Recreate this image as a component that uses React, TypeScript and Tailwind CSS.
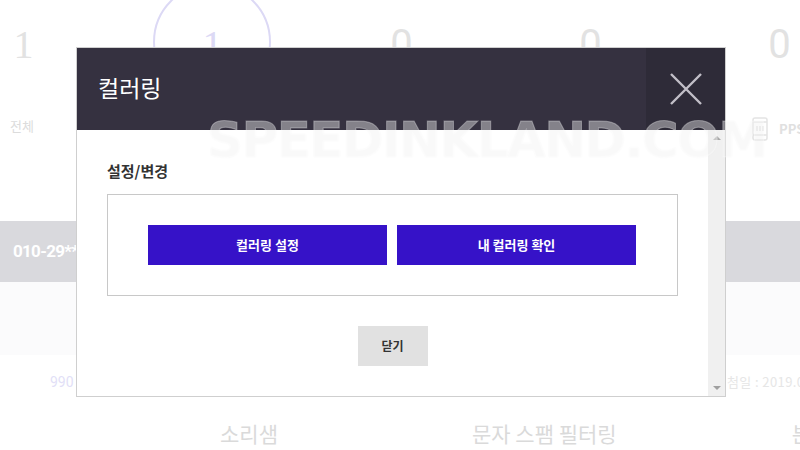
import React from 'react';

const font = { fontFamily: '"Noto Sans CJK KR", "Noto Sans", sans-serif' };

const counts = ['1', '1', '0', '0', '0'];

const App: React.FC = () => {
  return (
    <div className="relative w-[800px] h-[450px] overflow-hidden bg-white" style={font}>
      {/* Page behind the dialog */}
      <div className="flex flex-col h-full">
        <div className="h-[221px] relative">
          <div className="absolute left-[153px] top-[-17px] w-[118px] h-[118px] rounded-full border-2 border-[#dcd9f5]" />
          <div className="flex pt-[17px] h-[106px]">
            {counts.map((n, i) => (
              <div
                key={i}
                className={`w-[189px] shrink-0 text-center text-[40px] leading-[56px] ${i === 1 ? 'text-[#dcd9f5]' : 'text-[#e2e2e2]'} ${i === 0 ? 'ml-[-71px]' : ''}`}
                style={{ fontFamily: i === 0 || i === 1 ? '"Liberation Serif", serif' : 'Roboto, sans-serif' }}
              >
                {n}
              </div>
            ))}
          </div>
          <div className="flex justify-between items-center pl-[10px] mt-[4px]">
            <span className="text-[13px] text-[#dcdcdc]">전체</span>
            <span className="flex items-center gap-[11px] w-[48px] mt-[7px] whitespace-nowrap">
              <svg width="16" height="24" viewBox="0 0 16 24" fill="none" stroke="#e4e4e4" strokeWidth="1.5" className="shrink-0">
                <rect x="1" y="1" width="14" height="22" rx="2" />
                <path d="M1 5h14M1 18h14" />
                <path d="M5 9v5M8 9v5M11 9v5" />
              </svg>
              <span className="text-[13px] font-bold text-[#e0e0e0]">PPS</span>
            </span>
          </div>
        </div>
        <div className="h-[61px] bg-[#d9d9dd] flex items-center pl-[13px]">
          <span className="text-[17px] font-bold text-white tracking-[-0.7px]" style={{ fontFamily: 'Roboto, sans-serif' }}>
            010-29**
          </span>
        </div>
        <div className="h-[73px] bg-[#fbfbfc]" />
        <div className="flex h-[66px] pt-[18px] pl-[50px] text-[14px] leading-[18px] whitespace-nowrap">
          <span className="w-[677px] shrink-0 text-[#e2dff7]" style={{ fontFamily: 'Roboto, sans-serif' }}>990</span>
          <span className="text-[#e6e6e6] text-[13px] tracking-[0.4px]">첨일 : 2019.0</span>
        </div>
        <div className="flex text-[21px] leading-[26px] text-[#dadada] whitespace-nowrap mt-[-1px]">
          <span className="ml-[220px]">소리샘</span>
          <span className="ml-[194px]">문자 스팸 필터링</span>
          <span className="ml-[175px]">분</span>
        </div>
      </div>

      {/* Dialog */}
      <div className="absolute left-[76px] top-[47px] w-[650px] h-[350px] bg-white border border-[#cfcfcf] flex flex-col">
        <div className="h-[82px] shrink-0 bg-[#353140] flex justify-between">
          <h2 className="pl-[21px] text-[23px] leading-[79px] text-white">컬러링</h2>
          <button className="w-[79px] bg-[#2e2b38] flex items-center justify-center">
            <svg width="32" height="32" viewBox="0 0 32 32" stroke="#c2bfc8" strokeWidth="2.4">
              <path d="M1 1l30 30M31 1L1 31" />
            </svg>
          </button>
        </div>
        <div className="flex flex-1 min-h-0">
          <div className="flex-1 pl-[30px] pr-[30px] pt-[30px]">
            <h3 className="text-[15px] font-bold leading-[22px] text-[#333]">설정/변경</h3>
            <div className="mt-[12px] h-[102px] border border-[#c8c8c8] flex items-center pl-[40px] gap-[10px]">
              <button className="w-[239px] h-[40px] bg-[#3612c8] text-white text-[13px] font-bold">컬러링 설정</button>
              <button className="w-[239px] h-[40px] bg-[#3612c8] text-white text-[13px] font-bold">내 컬러링 확인</button>
            </div>
            <div className="flex justify-center mt-[30px]">
              <button className="w-[70px] h-[40px] bg-[#e1e1e1] text-[12px] font-bold text-[#333]">닫기</button>
            </div>
          </div>
          <div className="w-[17px] bg-[#f0f0f0] flex flex-col items-center justify-between py-[6px]">
            <div className="w-0 h-0 border-l-[4px] border-r-[4px] border-b-[4px] border-l-transparent border-r-transparent border-b-[#a8a8a8]" />
            <div className="w-0 h-0 border-l-[4px] border-r-[4px] border-t-[4px] border-l-transparent border-r-transparent border-t-[#a0a0a0]" />
          </div>
        </div>
      </div>

      {/* Watermark */}
      <div
        className="absolute left-[207px] top-[110px] text-[50px] leading-[60px] font-bold text-white/40 whitespace-nowrap tracking-[-1.5px] pointer-events-none"
        style={{ fontFamily: '"DejaVu Sans", sans-serif', textShadow: '0 0 2px rgba(0,0,0,0.04)', WebkitTextStroke: '1px rgba(255,255,255,0.3)' }}
      >
        SPEEDINKLAND.COM
      </div>
    </div>
  );
};

export default App;
